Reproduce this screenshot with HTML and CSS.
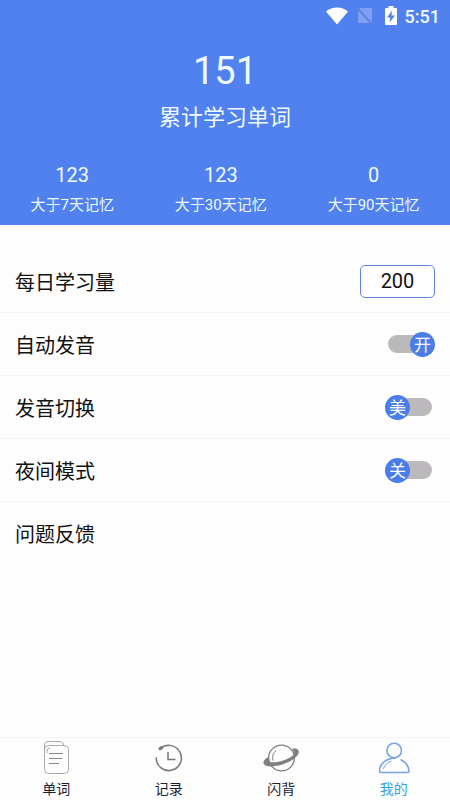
FILE: index.html
```html
<!DOCTYPE html>
<html lang="zh-CN">
<head>
<meta charset="utf-8">
<meta name="viewport" content="width=device-width, initial-scale=1">
<title>我的</title>
<link rel="stylesheet" href="styles.css">
</head>
<body>
<header class="hero">
  <div class="status">
    <svg width="24" height="18" viewBox="0 0 24 18" aria-hidden="true"><path d="M1 4.500C7-.9 17-.9 23 4.500L12 17.500z" fill="#fff"/></svg>
    <svg width="16" height="18" viewBox="0 0 16 18" aria-hidden="true"><path d="M3 1h12v15H1V4z" fill="#7f9ff4"/><path d="M0 1l15 16" stroke="#5a7fd8" stroke-width="1.800"/></svg>
    <svg class="battery" width="12" height="20" viewBox="0 0 12 20" aria-hidden="true"><path d="M3.500 0h5v2H11q1 0 1 1v15q0 1-1 1H1q-1 0-1-1V3q0-1 1-1h2.500z" fill="#fff"/><path d="M7 4.500L2 11.500h3.200L4.500 16.500 10 9.500H6.500z" fill="#5081ee"/></svg>
    <span>5:51</span>
  </div>
  <div class="total">151</div>
  <h1 class="caption">累计学习单词</h1>
  <div class="stats">
    <div class="stat"><b>123</b><span>大于7天记忆</span></div>
    <div class="stat"><b>123</b><span>大于30天记忆</span></div>
    <div class="stat"><b>0</b><span>大于90天记忆</span></div>
  </div>
</header>
<main class="settings">
  <div class="row"><label for="daily">每日学习量</label><input class="amount" id="daily" type="text" inputmode="numeric" value="200"></div>
  <div class="row"><label for="auto">自动发音</label><span class="switch"><input id="auto" type="checkbox" checked><span class="knob">开</span></span></div>
  <div class="row"><label for="accent">发音切换</label><span class="switch"><input id="accent" type="checkbox"><span class="knob">美</span></span></div>
  <div class="row"><label for="night">夜间模式</label><span class="switch"><input id="night" type="checkbox"><span class="knob">关</span></span></div>
  <a class="row" href="#feedback">问题反馈</a>
</main>
<nav class="tabs">
  <a class="tab" href="#words">
    <svg width="36" height="34" viewBox="0 0 36 34" fill="none" stroke="#aaa" aria-hidden="true"><rect x="6.500" y="4.500" width="24" height="28" rx="4"/><path d="M6.500 9V4q0-3.500 3.500-3.500h12q3 0 4 4M9 12V10q0-3 3-3"/><path d="M11 12.500h14M11 17.500h13M11 22.500h10" stroke="#888"/></svg>
    <span>单词</span>
  </a>
  <a class="tab" href="#records">
    <svg width="36" height="34" viewBox="0 0 36 34" fill="none" stroke="#777" stroke-width="1.500" aria-hidden="true"><path d="M5.200 16.500A12.600 12.600 0 1 0 9.500 7.500"/><path d="M8 8.500l3.500-2.500" stroke-width="3"/><path d="M17 11v7.500h7.500"/></svg>
    <span>记录</span>
  </a>
  <a class="tab" href="#flash">
    <svg width="36" height="34" viewBox="0 0 36 34" fill="none" stroke="#808080" aria-hidden="true"><circle cx="18.500" cy="17" r="12.900" stroke-width="1.300"/><path d="M5.700 15.500C1.500 18 0 20.500.5 22.500c2 5 16.500 3 25-1.500 7-3.500 11.500-8 10-11.500-.8-1.800-3.500-2.200-6.500-1.700 1.600 1.800 2.200 3.800 2.200 5.500-2 2-5 3.900-9 5.400-6 2.300-11 3-14.700 2.500-1.300-1.500-1.800-3.500-1.800-5.700z" fill="#808080" stroke="none"/><path d="M10 19.500c-1-4 0-7.500 3-10"/></svg>
    <span>闪背</span>
  </a>
  <a class="tab active" href="#me" aria-current="page">
    <svg width="36" height="34" viewBox="0 0 36 34" fill="none" stroke="#78a3e4" stroke-width="1.600" aria-hidden="true"><circle cx="18.200" cy="9.500" r="7.300"/><path d="M20 17C10 17 3.500 23 3.500 30q0 1.500 1.500 1.500h26.500q1.500 0 1.500-1.500c-.5-5-4-9.500-8.500-11.500"/><path d="M7.500 28c1-4 4-7 8-8" stroke-width="1"/></svg>
    <span>我的</span>
  </a>
</nav>
</body>
</html>
```
FILE: styles.css
```css
* { box-sizing: border-box; }

body {
  margin: 0;
  min-height: 100vh;
  display: flex;
  flex-direction: column;
  background: #fdfdfd;
  color: #111;
  font-family: Roboto, "Noto Sans CJK SC", sans-serif;
}

a { color: inherit; text-decoration: none; }

.hero {
  background: #5081ee;
  color: #effaff;
  padding-bottom: 8px;
  text-align: center;
}

.status {
  display: flex;
  justify-content: flex-end;
  align-items: center;
  gap: 8px;
  height: 32px;
  padding-right: 10px;
  font-size: 18px;
  font-weight: 500;
}

.battery { margin-left: 4px; }

.total {
  margin-top: 15px;
  font-size: 38px;
  line-height: 48px;
}

.caption {
  margin: 7px 0 0;
  font-size: 22px;
  font-weight: 400;
  line-height: 32px;
}

.stats {
  display: flex;
  justify-content: space-around;
  margin-top: 28px;
}

.stat {
  display: flex;
  flex-direction: column;
  gap: 5px;
}

.stat b {
  font-size: 20px;
  font-weight: 400;
  line-height: 26px;
}

.stat span {
  font-size: 15px;
  line-height: 24px;
}

.settings {
  flex: 1;
  padding-top: 25px;
}

.row {
  display: flex;
  align-items: center;
  justify-content: space-between;
  height: 63px;
  padding: 0 15px;
  border-bottom: 1px solid #f4f4f6;
  font-size: 20px;
}

.row:last-child { border-bottom: 0; }

.amount {
  width: 75px;
  height: 33px;
  border: 1px solid #5f86d3;
  border-radius: 5px;
  background: #fff;
  color: #111;
  font: inherit;
  text-align: center;
}

.switch {
  position: relative;
  display: flex;
  align-items: center;
  width: 50px;
  height: 25px;
  padding: 0 3px;
}

.switch input {
  appearance: none;
  width: 100%;
  height: 18px;
  margin: 0;
  border-radius: 9px;
  background: #bbb9bc;
}

.knob {
  position: absolute;
  top: 0;
  left: 0;
  width: 25px;
  height: 25px;
  border-radius: 50%;
  background: #4a7de8;
  color: #fff;
  font-size: 17px;
  line-height: 26px;
  text-align: center;
  pointer-events: none;
}

.switch input:checked + .knob {
  left: auto;
  right: 0;
}

.tabs {
  display: flex;
  height: 63px;
  border-top: 1px solid #f6f4f8;
}

.tab {
  flex: 1;
  display: flex;
  flex-direction: column;
  align-items: center;
  gap: 4px;
  padding-top: 3px;
  color: #1c1c34;
  font-size: 14px;
  line-height: 20px;
}

.active { color: #2fa6dc; }
```
